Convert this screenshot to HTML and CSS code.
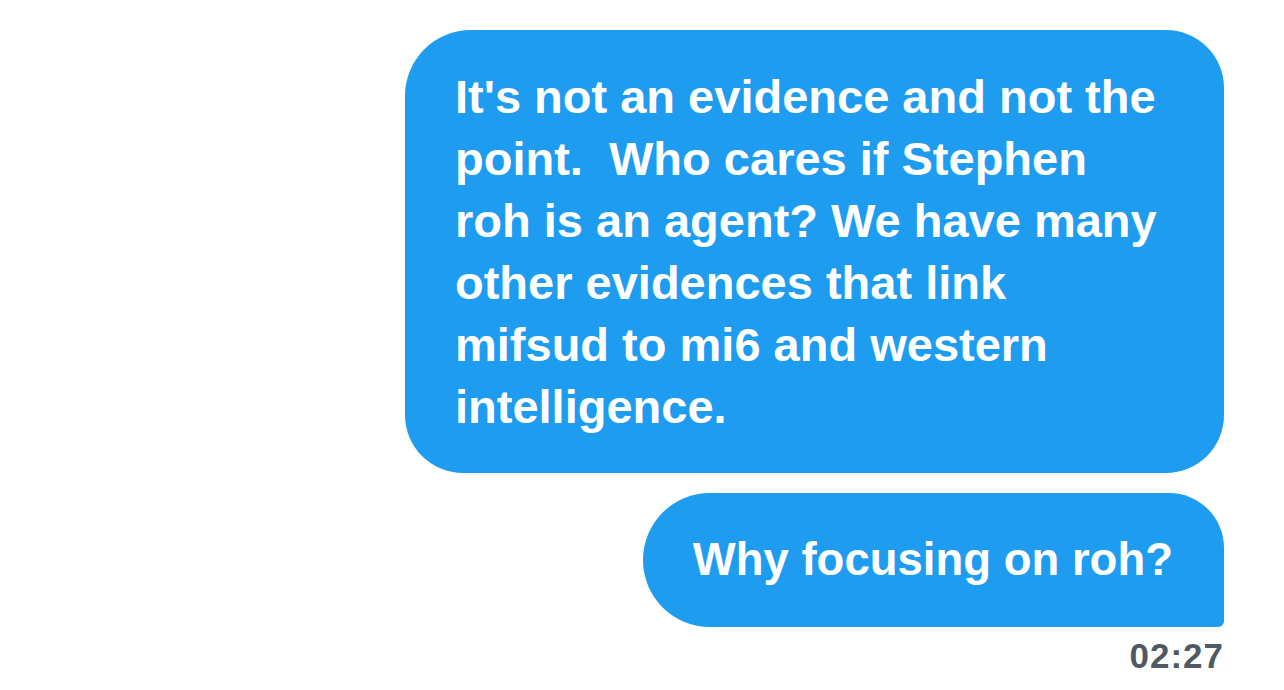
FILE: index.html
```html
<!DOCTYPE html>
<html lang="en">
<head>
<meta charset="utf-8">
<title>Messages</title>
<link rel="stylesheet" href="styles.css">
</head>
<body>
<main class="thread">
  <div class="bubble bubble-long">
    <p class="msg-text">It's not an evidence and not the<br>point.&nbsp; Who cares if Stephen<br>roh is an agent? We have many<br>other evidences that link<br>mifsud to mi6 and western<br>intelligence.</p>
  </div>
  <div class="bubble bubble-short">
    <p class="msg-text msg-text-short">Why focusing on roh?</p>
  </div>
  <div class="timestamp">02:27</div>
</main>
</body>
</html>
```

FILE: styles.css
```css
html, body {
  margin: 0;
  padding: 0;
  background: #ffffff;
}

body {
  font-family: "Liberation Sans", Arial, sans-serif;
}

.thread {
  display: flex;
  flex-direction: column;
  align-items: flex-end;
  gap: 20px;
  padding: 30px 60px 0 0;
}

.bubble {
  background: #1e9cf0;
  color: #ffffff;
  box-sizing: border-box;
}

.bubble-long {
  width: 819px;
  padding: 36px 50px 35px 50px;
  border-radius: 66px 58px 58px 58px;
}

.bubble-short {
  padding: 36px 51px 36px 50px;
  border-radius: 67px 55px 6px 67px;
}

.msg-text {
  margin: 0;
  font-size: 47px;
  font-weight: 700;
  line-height: 62px;
  white-space: nowrap;
}

.msg-text-short {
  font-size: 45.5px;
}

.timestamp {
  margin-top: -9px;
  font-size: 35px;
  font-weight: 700;
  line-height: 35px;
  letter-spacing: 1px;
  color: #4f5964;
}
```
